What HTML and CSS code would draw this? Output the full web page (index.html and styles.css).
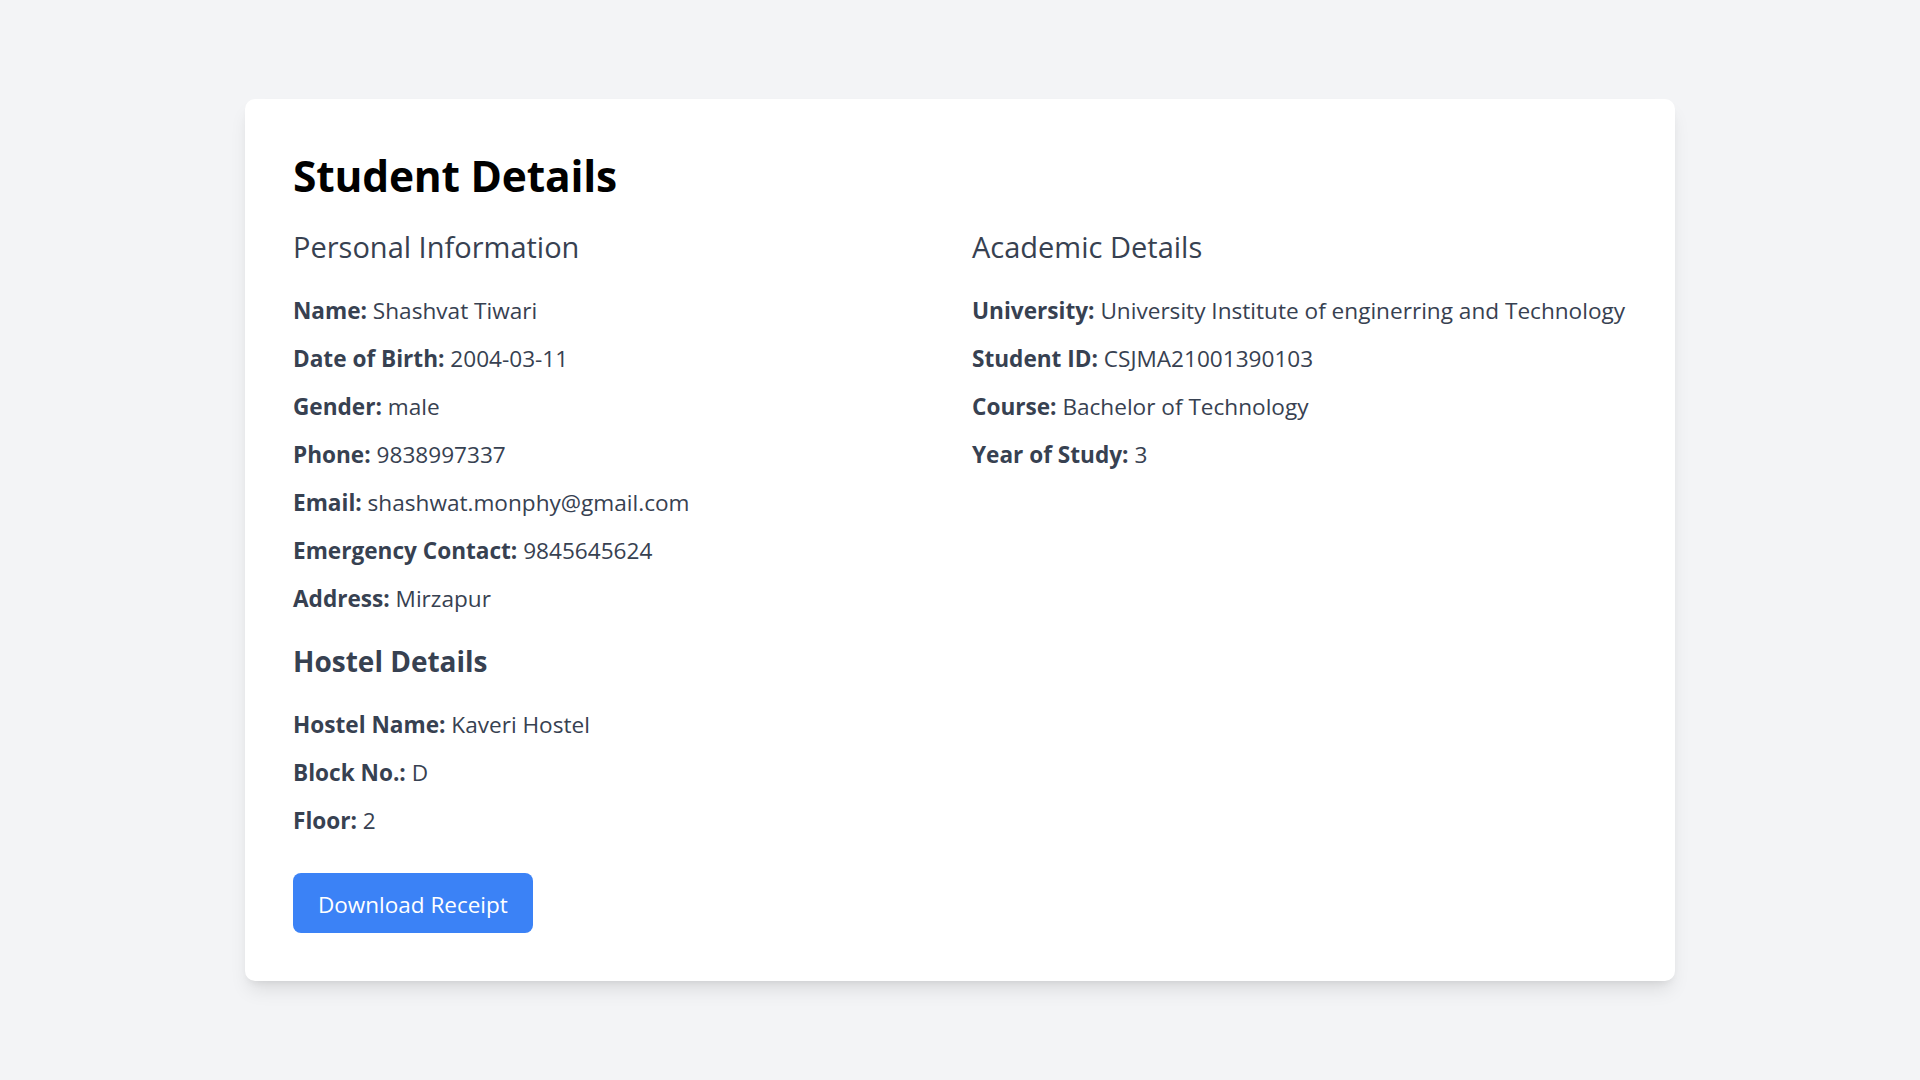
FILE: index.html
```html
<!DOCTYPE html>
<html lang="en">
<head>
<meta charset="utf-8">
<title>Student Details</title>
<link rel="stylesheet" href="styles.css">
</head>
<body>
<main class="page">
  <section class="card">
    <h1 class="title">Student Details</h1>
    <div class="grid">
      <div class="col">
        <h2 class="section-title">Personal Information</h2>
        <p class="row"><span class="label">Name:</span> Shashvat Tiwari</p>
        <p class="row"><span class="label">Date of Birth:</span> 2004-03-11</p>
        <p class="row"><span class="label">Gender:</span> male</p>
        <p class="row"><span class="label">Phone:</span> 9838997337</p>
        <p class="row"><span class="label">Email:</span> shashwat.monphy@gmail.com</p>
        <p class="row"><span class="label">Emergency Contact:</span> 9845645624</p>
        <p class="row"><span class="label">Address:</span> Mirzapur</p>
      </div>
      <div class="col">
        <h2 class="section-title">Academic Details</h2>
        <p class="row"><span class="label">University:</span> University Institute of enginerring and Technology</p>
        <p class="row"><span class="label">Student ID:</span> CSJMA21001390103</p>
        <p class="row"><span class="label">Course:</span> Bachelor of Technology</p>
        <p class="row"><span class="label">Year of Study:</span> 3</p>
      </div>
    </div>
    <div class="hostel">
      <h3 class="hostel-title">Hostel Details</h3>
      <p class="row"><span class="label">Hostel Name:</span> Kaveri Hostel</p>
      <p class="row"><span class="label">Block No.:</span> D</p>
      <p class="row"><span class="label">Floor:</span> 2</p>
    </div>
    <button class="btn" type="button">Download Receipt</button>
  </section>
</main>
</body>
</html>
```

FILE: styles.css
```css
* { box-sizing: border-box; }

html, body {
  margin: 0;
  padding: 0;
}

body {
  background: #f3f4f6;
  font-family: "Open Sans", "Noto Sans", "Liberation Sans", sans-serif;
  color: #374151;
}

.page {
  min-height: 100vh;
  display: flex;
  align-items: center;
  justify-content: center;
}

.card {
  width: 1430px;
  background: #ffffff;
  border-radius: 10px;
  box-shadow: 0 12px 19px -4px rgba(0, 0, 0, 0.1), 0 5px 8px -5px rgba(0, 0, 0, 0.1);
  padding: 50px 48px 48px 48px;
}

.title {
  margin: 0 0 24px 0;
  font-size: 42.5px;
  line-height: 54px;
  font-weight: 700;
  color: #000000;
  letter-spacing: -0.2px;
}

.grid {
  display: grid;
  grid-template-columns: 1fr 1fr;
  column-gap: 24px;
}

.section-title {
  margin: 0 0 20px 0;
  font-size: 29px;
  line-height: 40px;
  font-weight: 400;
  color: #374151;
}

.row {
  margin: 0;
  font-size: 22.6px;
  line-height: 48px;
  color: #374151;
}

.label {
  font-weight: 700;
}

.hostel {
  margin-top: 18px;
}

.hostel-title {
  margin: 0 0 20px 0;
  font-size: 28px;
  line-height: 40px;
  font-weight: 700;
  color: #374151;
}

.btn {
  display: inline-block;
  margin-top: 28px;
  height: 60px;
  padding: 3px 25px 0 25px;
  border: 0;
  border-radius: 8px;
  background: #3b82f6;
  color: #ffffff;
  font-family: inherit;
  font-size: 22.5px;
  line-height: 56px;
  cursor: pointer;
}
```
